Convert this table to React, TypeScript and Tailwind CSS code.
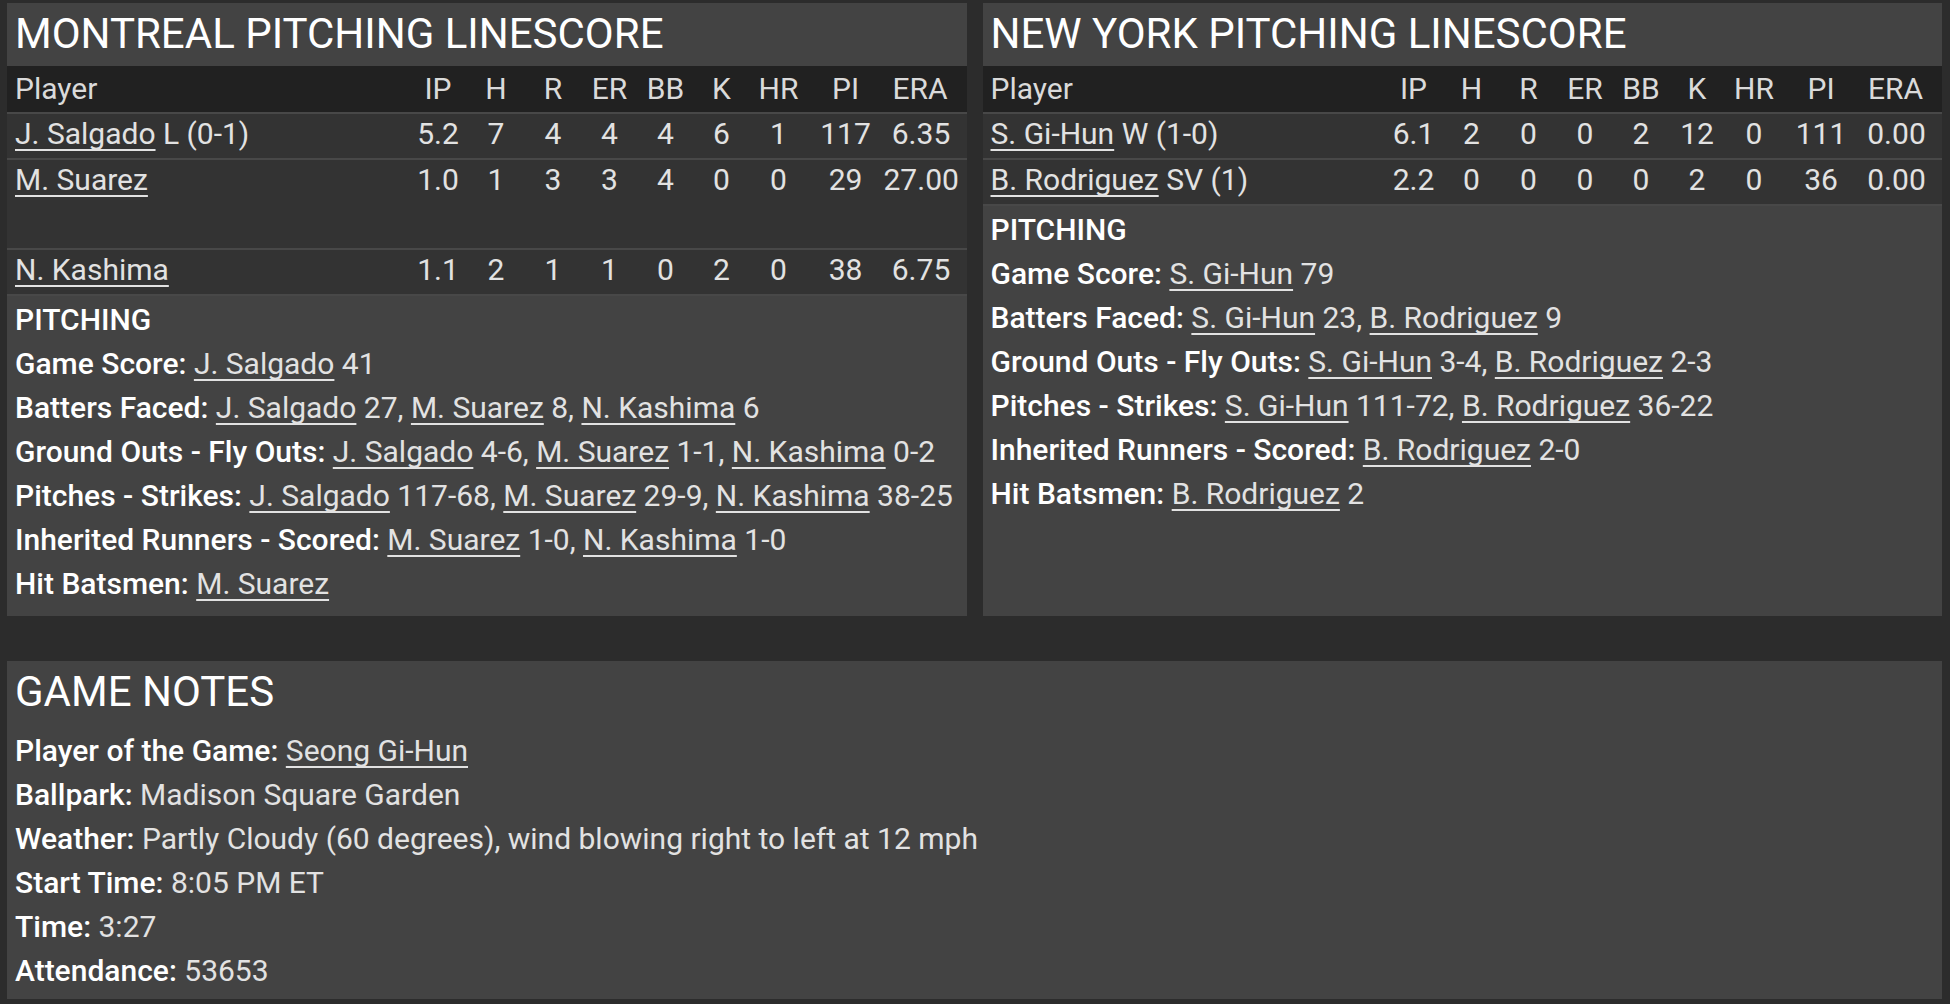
import React from "react";

type Pitcher = {
  name: string;
  note?: string;
  stats: string[];
  tall?: boolean;
};

type Part = [string, string];

type StatLine = {
  label: string;
  parts: Part[];
};

type TeamBox = {
  title: string;
  pitchers: Pitcher[];
  lines: StatLine[];
};

const headers = ["IP", "H", "R", "ER", "BB", "K", "HR", "PI", "ERA"];

// fixed column widths so both linescores line up the same way
const rowGrid =
  "grid grid-cols-[1fr_59px_57px_57px_56px_56px_56px_58px_76px_83px]";

const teams: TeamBox[] = [
  {
    title: "MONTREAL PITCHING LINESCORE",
    pitchers: [
      {
        name: "J. Salgado",
        note: "L (0-1)",
        stats: ["5.2", "7", "4", "4", "4", "6", "1", "117", "6.35"],
      },
      {
        name: "M. Suarez",
        stats: ["1.0", "1", "3", "3", "4", "0", "0", "29", "27.00"],
        tall: true,
      },
      {
        name: "N. Kashima",
        stats: ["1.1", "2", "1", "1", "0", "2", "0", "38", "6.75"],
      },
    ],
    lines: [
      { label: "Game Score:", parts: [["J. Salgado", " 41"]] },
      {
        label: "Batters Faced:",
        parts: [
          ["J. Salgado", " 27, "],
          ["M. Suarez", " 8, "],
          ["N. Kashima", " 6"],
        ],
      },
      {
        label: "Ground Outs - Fly Outs:",
        parts: [
          ["J. Salgado", " 4-6, "],
          ["M. Suarez", " 1-1, "],
          ["N. Kashima", " 0-2"],
        ],
      },
      {
        label: "Pitches - Strikes:",
        parts: [
          ["J. Salgado", " 117-68, "],
          ["M. Suarez", " 29-9, "],
          ["N. Kashima", " 38-25"],
        ],
      },
      {
        label: "Inherited Runners - Scored:",
        parts: [
          ["M. Suarez", " 1-0, "],
          ["N. Kashima", " 1-0"],
        ],
      },
      { label: "Hit Batsmen:", parts: [["M. Suarez", ""]] },
    ],
  },
  {
    title: "NEW YORK PITCHING LINESCORE",
    pitchers: [
      {
        name: "S. Gi-Hun",
        note: "W (1-0)",
        stats: ["6.1", "2", "0", "0", "2", "12", "0", "111", "0.00"],
      },
      {
        name: "B. Rodriguez",
        note: "SV (1)",
        stats: ["2.2", "0", "0", "0", "0", "2", "0", "36", "0.00"],
      },
    ],
    lines: [
      { label: "Game Score:", parts: [["S. Gi-Hun", " 79"]] },
      {
        label: "Batters Faced:",
        parts: [
          ["S. Gi-Hun", " 23, "],
          ["B. Rodriguez", " 9"],
        ],
      },
      {
        label: "Ground Outs - Fly Outs:",
        parts: [
          ["S. Gi-Hun", " 3-4, "],
          ["B. Rodriguez", " 2-3"],
        ],
      },
      {
        label: "Pitches - Strikes:",
        parts: [
          ["S. Gi-Hun", " 111-72, "],
          ["B. Rodriguez", " 36-22"],
        ],
      },
      {
        label: "Inherited Runners - Scored:",
        parts: [["B. Rodriguez", " 2-0"]],
      },
      { label: "Hit Batsmen:", parts: [["B. Rodriguez", " 2"]] },
    ],
  },
];

const PlayerLink = ({ children }: { children: React.ReactNode }) => (
  <span className="underline decoration-2 underline-offset-[5px] [text-decoration-skip-ink:none]">
    {children}
  </span>
);

const Label = ({ children }: { children: React.ReactNode }) => (
  <span className="font-medium text-white">{children}</span>
);

const Linescore = ({ team }: { team: TeamBox }) => {
  return (
    <div className="flex flex-1 flex-col bg-[#434343]">
      <h2 className="h-[63px] pl-2 text-[42px] leading-[62px] text-white">
        {team.title}
      </h2>
      <div className={`${rowGrid} h-[46px] items-center bg-[#212121] text-[#dadada]`}>
        <div className="pl-2">Player</div>
        {headers.map((h, i) => (
          <div key={h} className={`text-center ${i === 8 ? "pr-[10px]" : ""}`}>
            {h}
          </div>
        ))}
      </div>
      {team.pitchers.map((p) => (
        <div
          key={p.name}
          className={`${rowGrid} items-start border-t-2 border-[#484848] bg-[#333333] leading-[40px] text-[#e2e2e2] ${
            p.tall ? "h-[90px]" : "h-[46px]"
          }`}
        >
          <div className="pl-2 whitespace-nowrap">
            <PlayerLink>{p.name}</PlayerLink>
            {p.note ? ` ${p.note}` : ""}
          </div>
          {p.stats.map((s, i) => (
            <div
              key={i}
              className={`text-center whitespace-nowrap ${i === 8 ? "pr-[8px]" : ""}`}
            >
              {s}
            </div>
          ))}
        </div>
      ))}
      <div className="flex-1 border-t-2 border-[#484848] px-2 pt-[2px] pb-[10px] text-[#e2e2e2]">
        <div>
          <Label>PITCHING</Label>
        </div>
        {team.lines.map((line) => (
          <div key={line.label} className="whitespace-nowrap">
            <Label>{line.label}</Label>{" "}
            {line.parts.map(([name, after], i) => (
              <React.Fragment key={i}>
                <PlayerLink>{name}</PlayerLink>
                {after}
              </React.Fragment>
            ))}
          </div>
        ))}
      </div>
    </div>
  );
};

const notes: Array<{ label: string; value: string; link?: boolean }> = [
  { label: "Player of the Game:", value: "Seong Gi-Hun", link: true },
  { label: "Ballpark:", value: "Madison Square Garden" },
  {
    label: "Weather:",
    value: "Partly Cloudy (60 degrees), wind blowing right to left at 12 mph",
  },
  { label: "Start Time:", value: "8:05 PM ET" },
  { label: "Time:", value: "3:27" },
  { label: "Attendance:", value: "53653" },
];

export default function App() {
  return (
    <div className="min-h-screen bg-[#2c2c2c] pt-[3px] pl-[7px] pr-[8px] pb-[7px] font-['Roboto',sans-serif] text-[30px] leading-[44px]">
      <div className="flex gap-4">
        {teams.map((t) => (
          <Linescore key={t.title} team={t} />
        ))}
      </div>
      <div className="mt-[45px] bg-[#434343] px-2 pb-[6px] text-[#e2e2e2]">
        <h2 className="h-[62px] text-[42px] leading-[62px] text-white">
          GAME NOTES
        </h2>
        <div className="mt-[6px]">
          {notes.map((n) => (
            <div key={n.label} className="whitespace-nowrap">
              <Label>{n.label}</Label>{" "}
              {n.link ? <PlayerLink>{n.value}</PlayerLink> : n.value}
            </div>
          ))}
        </div>
      </div>
    </div>
  );
}
